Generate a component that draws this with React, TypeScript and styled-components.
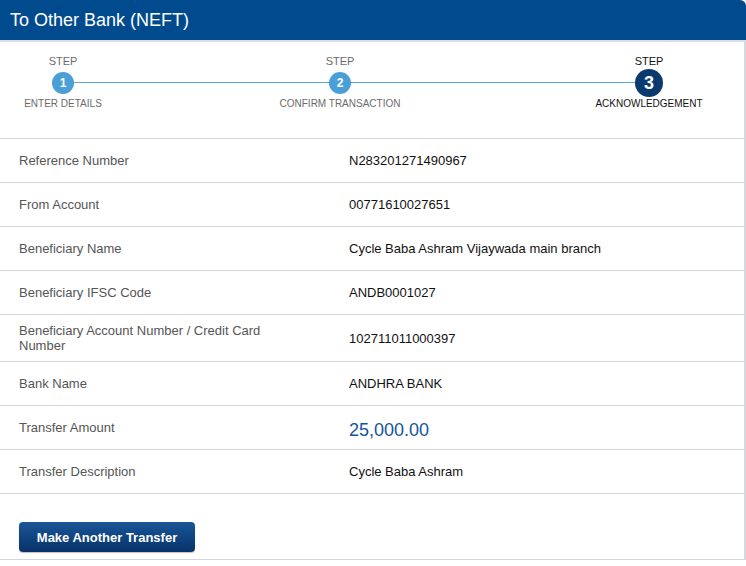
import React from "react";
import styled, { createGlobalStyle } from "styled-components";

const Global = createGlobalStyle`
  html, body { margin: 0; padding: 0; background: #ffffff; }
  body { font-family: "Liberation Sans", Arial, Helvetica, sans-serif; }
  * { box-sizing: border-box; }
`;

const Page = styled.div`
  width: 746px;
  height: 566px;
  overflow: hidden;
  background: #fff;
`;

const Header = styled.div`
  height: 40px;
  background: #004b8e;
  color: #fff;
  font-size: 18px;
  line-height: 40px;
  padding-left: 10px;
  border-top-right-radius: 6px;
`;

const Panel = styled.div`
  border-top: 2px solid #d9deec;
  border-right: 2px solid #d6d7df;
  width: 746px;
`;

const Steps = styled.div`
  position: relative;
  height: 97px;
  display: flex;
  padding-top: 13px;
  border-bottom: 1px solid #d3d5e3;
  &::before {
    content: "";
    position: absolute;
    left: 63px;
    width: 586px;
    top: 40px;
    height: 1px;
    background: #5aa7dc;
  }
`;

const Step = styled.div<{ $left: number }>`
  position: relative;
  width: 110px;
  margin-left: ${(p) => p.$left}px;
  display: flex;
  flex-direction: column;
  align-items: center;
`;

const StepWord = styled.div<{ $active?: boolean }>`
  font-size: 11px;
  line-height: 13px;
  color: ${(p) => (p.$active ? "#111" : "#6b6b6b")};
`;

const Circle = styled.div<{ $active?: boolean }>`
  width: ${(p) => (p.$active ? 28 : 22)}px;
  height: ${(p) => (p.$active ? 28 : 22)}px;
  margin: ${(p) => (p.$active ? "1px 0 1px" : "4px 0 4px")};
  border-radius: 50%;
  background: ${(p) => (p.$active ? "#0b3b6e" : "#4b9fd7")};
  color: #fff;
  font-weight: bold;
  font-size: ${(p) => (p.$active ? 18 : 12)}px;
  display: flex;
  align-items: center;
  justify-content: center;
`;

const StepLabel = styled.div<{ $active?: boolean }>`
  font-size: 10px;
  line-height: 12px;
  white-space: nowrap;
  color: ${(p) => (p.$active ? "#111" : "#6b6b6b")};
`;

const Row = styled.div<{ $tall?: boolean }>`
  display: grid;
  grid-template-columns: 330px 1fr;
  align-items: center;
  min-height: ${(p) => (p.$tall ? 47 : 44)}px;
  padding-left: 19px;
  border-bottom: 1px solid #d3d5e3;
`;

const Label = styled.div`
  font-size: 13px;
  line-height: 15px;
  color: #555;
  padding-right: 60px;
`;

const Value = styled.div<{ $amount?: boolean }>`
  font-size: ${(p) => (p.$amount ? 18 : 13)}px;
  color: ${(p) => (p.$amount ? "#15549a" : "#111")};
  padding-top: ${(p) => (p.$amount ? 6 : 0)}px;
`;

const Footer = styled.div`
  height: 66px;
  padding: 28px 0 0 19px;
  border-bottom: 1px solid #d3d5e3;
`;

const Button = styled.button`
  width: 176px;
  height: 30px;
  border: none;
  border-radius: 4px;
  background: linear-gradient(#1a5698, #073268);
  color: #fff;
  font-family: "Liberation Sans", Arial, sans-serif;
  font-weight: bold;
  font-size: 13px;
  box-shadow: 0 1px 1px rgba(0, 0, 0, 0.25);
  cursor: pointer;
`;

const steps = [
  { n: 1, label: "ENTER DETAILS", left: 8 },
  { n: 2, label: "CONFIRM TRANSACTION", left: 167 },
  { n: 3, label: "ACKNOWLEDGEMENT", left: 199, active: true },
];

const rows: { label: string; value: string; amount?: boolean; tall?: boolean }[] = [
  { label: "Reference Number", value: "N283201271490967" },
  { label: "From Account", value: "00771610027651" },
  { label: "Beneficiary Name", value: "Cycle Baba Ashram Vijaywada main branch" },
  { label: "Beneficiary IFSC Code", value: "ANDB0001027" },
  { label: "Beneficiary Account Number / Credit Card Number", value: "102711011000397", tall: true },
  { label: "Bank Name", value: "ANDHRA BANK" },
  { label: "Transfer Amount", value: "25,000.00", amount: true },
  { label: "Transfer Description", value: "Cycle Baba Ashram" },
];

export default function App() {
  return (
    <Page>
      <Global />
      <Header>To Other Bank (NEFT)</Header>
      <Panel>
        <Steps>
          {steps.map((s) => (
            <Step key={s.n} $left={s.left}>
              <StepWord $active={s.active}>STEP</StepWord>
              <Circle $active={s.active}>{s.n}</Circle>
              <StepLabel $active={s.active}>{s.label}</StepLabel>
            </Step>
          ))}
        </Steps>
        {rows.map((r) => (
          <Row key={r.label} $tall={r.tall}>
            <Label>{r.label}</Label>
            <Value $amount={r.amount}>{r.value}</Value>
          </Row>
        ))}
        <Footer>
          <Button>Make Another Transfer</Button>
        </Footer>
      </Panel>
    </Page>
  );
}
